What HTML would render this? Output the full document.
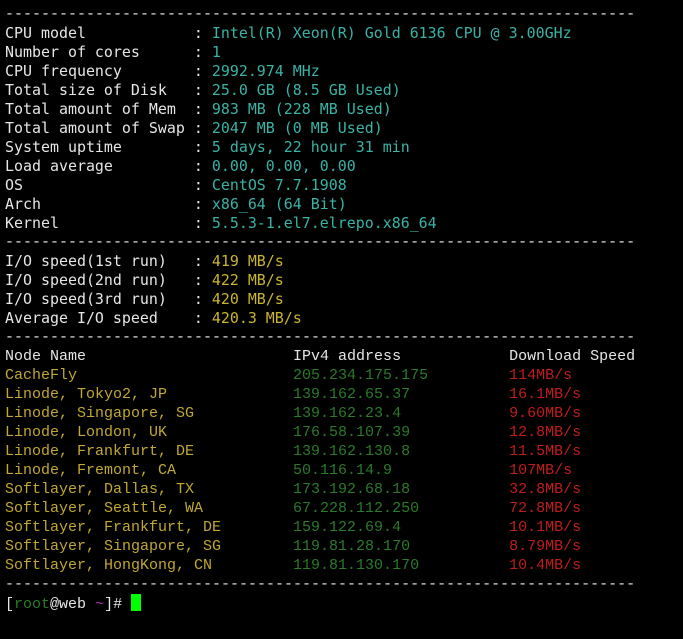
<!DOCTYPE html>
<html><head><meta charset="utf-8"><style>
html,body{margin:0;background:#000;width:683px;height:639px;overflow:hidden}
pre{margin:0;padding:5px 0 0 5px;font-family:"DejaVu Sans Mono","Liberation Mono",monospace;font-size:14.95px;line-height:19px;color:#e6e6e6;white-space:pre}
.n{font-family:"Liberation Mono",monospace;font-size:15px;display:block;height:19px}
.c{color:#3ab3a6}.y{color:#c9b52e}.ny{color:#c0a832}.g{color:#2a7a2a}.r{color:#c01c1c}.m{color:#b030b0}
.cur{display:inline-block;width:10px;height:17px;background:#00ff00;vertical-align:-3px}
</style></head><body><pre><span class="n">----------------------------------------------------------------------</span>CPU model            : <span class="c">Intel(R) Xeon(R) Gold 6136 CPU @ 3.00GHz</span>
Number of cores      : <span class="c">1</span>
CPU frequency        : <span class="c">2992.974 MHz</span>
Total size of Disk   : <span class="c">25.0 GB (8.5 GB Used)</span>
Total amount of Mem  : <span class="c">983 MB (228 MB Used)</span>
Total amount of Swap : <span class="c">2047 MB (0 MB Used)</span>
System uptime        : <span class="c">5 days, 22 hour 31 min</span>
Load average         : <span class="c">0.00, 0.00, 0.00</span>
OS                   : <span class="c">CentOS 7.7.1908</span>
Arch                 : <span class="c">x86_64 (64 Bit)</span>
Kernel               : <span class="c">5.5.3-1.el7.elrepo.x86_64</span>
<span class="n">----------------------------------------------------------------------</span>I/O speed(1st run)   : <span class="y">419 MB/s</span>
I/O speed(2nd run)   : <span class="y">422 MB/s</span>
I/O speed(3rd run)   : <span class="y">420 MB/s</span>
Average I/O speed    : <span class="y">420.3 MB/s</span>
<span class="n">----------------------------------------------------------------------</span><span class="n">Node Name                       IPv4 address            Download Speed</span><span class="n"><span class="ny">CacheFly                        </span><span class="g">205.234.175.175         </span><span class="r">114MB/s</span></span><span class="n"><span class="ny">Linode, Tokyo2, JP              </span><span class="g">139.162.65.37           </span><span class="r">16.1MB/s</span></span><span class="n"><span class="ny">Linode, Singapore, SG           </span><span class="g">139.162.23.4            </span><span class="r">9.60MB/s</span></span><span class="n"><span class="ny">Linode, London, UK              </span><span class="g">176.58.107.39           </span><span class="r">12.8MB/s</span></span><span class="n"><span class="ny">Linode, Frankfurt, DE           </span><span class="g">139.162.130.8           </span><span class="r">11.5MB/s</span></span><span class="n"><span class="ny">Linode, Fremont, CA             </span><span class="g">50.116.14.9             </span><span class="r">107MB/s</span></span><span class="n"><span class="ny">Softlayer, Dallas, TX           </span><span class="g">173.192.68.18           </span><span class="r">32.8MB/s</span></span><span class="n"><span class="ny">Softlayer, Seattle, WA          </span><span class="g">67.228.112.250          </span><span class="r">72.8MB/s</span></span><span class="n"><span class="ny">Softlayer, Frankfurt, DE        </span><span class="g">159.122.69.4            </span><span class="r">10.1MB/s</span></span><span class="n"><span class="ny">Softlayer, Singapore, SG        </span><span class="g">119.81.28.170           </span><span class="r">8.79MB/s</span></span><span class="n"><span class="ny">Softlayer, HongKong, CN         </span><span class="g">119.81.130.170          </span><span class="r">10.4MB/s</span></span><span class="n">----------------------------------------------------------------------</span><span class="n">[<span class="g">root</span>@web <span class="m">~</span>]# <span class="cur"></span></span></pre></body></html>
